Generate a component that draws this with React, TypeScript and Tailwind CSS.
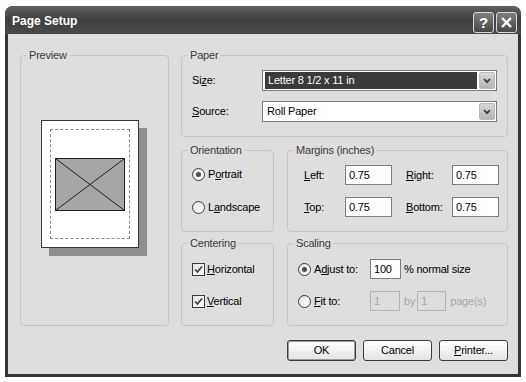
import type { ReactNode } from "react";

function U({ children }: { children: ReactNode }) {
  return <span className="underline decoration-1 underline-offset-[1px]">{children}</span>;
}

function Group({
  label,
  className,
  children,
}: {
  label: string;
  className: string;
  children?: ReactNode;
}) {
  return (
    <fieldset className={`rounded-[4px] border border-[#c6c6c6] ${className}`}>
      <legend className="ml-[6px] px-[2px] text-[11px] leading-[12px] text-[#3a3a3a]">
        {label}
      </legend>
      {children}
    </fieldset>
  );
}

function Radio({ checked }: { checked?: boolean }) {
  return (
    <span className="flex h-[13px] w-[13px] shrink-0 items-center justify-center rounded-full border border-[#3a3a3a] bg-gradient-to-br from-[#e2e2e2] to-white">
      {checked && <span className="h-[5px] w-[5px] rounded-full bg-[#4c4c4c]" />}
    </span>
  );
}

function Check() {
  return (
    <span className="flex h-[13px] w-[13px] shrink-0 items-center justify-center border border-[#3a3a3a] bg-gradient-to-br from-[#e2e2e2] to-white">
      <svg width="9" height="9" viewBox="0 0 9 9">
        <path d="M1 4.5 L3.5 7 L8 1.5" fill="none" stroke="#3a3a3a" strokeWidth="1.6" />
      </svg>
    </span>
  );
}

function Field({
  value,
  className,
  disabled,
}: {
  value: string;
  className: string;
  disabled?: boolean;
}) {
  return (
    <div
      className={`flex h-[20px] items-center border pl-[3px] ${
        disabled
          ? "border-[#b4b4b4] bg-[#dddddd] text-[#a6a6a6]"
          : "border-[#7c7c7c] bg-white text-black"
      } ${className}`}
    >
      {value}
    </div>
  );
}

function Select({ value, selected }: { value: string; selected?: boolean }) {
  return (
    <div className="flex h-[21px] w-[235px] items-center border border-[#7c7c7c] bg-white p-[1px]">
      <div
        className={`flex h-full flex-1 items-center pl-[3px] ${
          selected ? "mx-[1px] bg-[#3a3a3a] text-white" : "text-black"
        }`}
      >
        {value}
      </div>
      <div className="ml-[1px] flex h-full w-[16px] items-center justify-center rounded-[2px] border border-[#b8b8b8] bg-gradient-to-b from-[#d8d8d8] to-[#b4b4b4]">
        <svg width="8" height="6" viewBox="0 0 8 6">
          <path d="M1 1 L4 4.2 L7 1" fill="none" stroke="#3a3a3a" strokeWidth="1.8" />
        </svg>
      </div>
    </div>
  );
}

function Button({ children, primary }: { children: ReactNode; primary?: boolean }) {
  return (
    <button
      type="button"
      className={`flex h-[21px] w-[69px] items-center justify-center rounded-[3px] border border-[#3c3c3c] bg-gradient-to-b from-white to-[#e4e4e4] text-[11px] text-black ${
        primary ? "shadow-[inset_0_0_0_1px_#9c9c9c]" : ""
      }`}
    >
      {children}
    </button>
  );
}

export default function App() {
  return (
    <div className="h-[382px] w-[526px] bg-white pl-[5px] pt-[6px] font-[family-name:Liberation_Sans,Arial,sans-serif] text-[11px] tracking-[-0.2px] text-black">
      <div className="flex h-[371px] w-[516px] flex-col overflow-hidden rounded-t-[8px] bg-[#363636]">
        {/* title bar */}
        <div className="flex h-[28px] shrink-0 items-start justify-between bg-gradient-to-b from-[#616161] via-[#3f3f3f] to-[#4a4a4a] pl-[7px] pr-[4px]">
          <span className="pt-[1px] text-[12px] font-bold leading-[28px] tracking-normal text-white">
            Page Setup
          </span>
          <div className="flex gap-[2px] pt-[6px]">
            <div className="flex h-[21px] w-[21px] items-center justify-center rounded-[3px] border border-[#d8d8d8] bg-gradient-to-b from-[#808080] to-[#474747] text-[15px] font-bold leading-none text-white">
              ?
            </div>
            <div className="flex h-[21px] w-[21px] items-center justify-center rounded-[3px] border border-[#d8d8d8] bg-gradient-to-b from-[#808080] to-[#474747]">
              <svg width="13" height="13" viewBox="0 0 13 13">
                <path d="M2 2 L11 11 M11 2 L2 11" stroke="white" strokeWidth="2.4" />
              </svg>
            </div>
          </div>
        </div>

        {/* body */}
        <div className="mx-[3px] mb-[3px] flex flex-1 flex-col bg-[#dedede] pl-[12px] pr-[9px] pt-[15px]">
          <div className="flex gap-[12px]">
            <Group label="Preview" className="h-[277px] w-[149px]">
              <div className="pl-[20px] pt-[59px]">
                <div className="h-[128px] w-[98px] border border-[#3a3a3a] bg-white p-[8px] shadow-[8px_8px_0_#8e8e8e]">
                  <div className="flex h-full w-full items-center border border-dashed border-[#8a8a8a] px-[4px]">
                    <svg className="h-[53px] w-full" viewBox="0 0 70 53" preserveAspectRatio="none">
                      <rect x="0.5" y="0.5" width="69" height="52" fill="#a6a6a6" stroke="#222" />
                      <path d="M0.5 0.5 L69.5 52.5 M69.5 0.5 L0.5 52.5" stroke="#222" strokeWidth="1" />
                    </svg>
                  </div>
                </div>
              </div>
            </Group>

            <div className="flex w-[327px] flex-col">
              <Group label="Paper" className="h-[88px] w-full">
                <div className="pl-[10px] pt-[9px]">
                  <div className="flex h-[21px] items-center">
                    <span className="w-[70px]">
                      Si<U>z</U>e:
                    </span>
                    <Select value="Letter 8 1/2 x 11 in" selected />
                  </div>
                  <div className="mt-[10px] flex h-[21px] items-center">
                    <span className="w-[70px]">
                      <U>S</U>ource:
                    </span>
                    <Select value="Roll Paper" />
                  </div>
                </div>
              </Group>

              <div className="mt-[7px] flex gap-[13px]">
                <Group label="Orientation" className="h-[88px] w-[93px]">
                  <div className="pl-[10px] pt-[8px]">
                    <div className="flex h-[20px] items-center gap-[3px]">
                      <Radio checked />
                      <span>
                        P<U>o</U>rtrait
                      </span>
                    </div>
                    <div className="mt-[13px] flex h-[20px] items-center gap-[3px]">
                      <Radio />
                      <span>
                        L<U>a</U>ndscape
                      </span>
                    </div>
                  </div>
                </Group>

                <Group label="Margins (inches)" className="h-[88px] w-[221px]">
                  <div className="pl-[16px] pt-[9px]">
                    <div className="flex items-center">
                      <span className="w-[41px]">
                        <U>L</U>eft:
                      </span>
                      <Field value="0.75" className="w-[47px]" />
                      <span className="ml-[14px] w-[46px]">
                        <U>R</U>ight:
                      </span>
                      <Field value="0.75" className="w-[47px]" />
                    </div>
                    <div className="mt-[12px] flex items-center">
                      <span className="w-[41px]">
                        <U>T</U>op:
                      </span>
                      <Field value="0.75" className="w-[47px]" />
                      <span className="ml-[14px] w-[46px]">
                        <U>B</U>ottom:
                      </span>
                      <Field value="0.75" className="w-[47px]" />
                    </div>
                  </div>
                </Group>
              </div>

              <div className="mt-[5px] flex gap-[13px]">
                <Group label="Centering" className="h-[89px] w-[93px]">
                  <div className="pl-[10px] pt-[10px]">
                    <div className="flex h-[20px] items-center gap-[2px]">
                      <Check />
                      <span>
                        <U>H</U>orizontal
                      </span>
                    </div>
                    <div className="mt-[12px] flex h-[20px] items-center gap-[2px]">
                      <Check />
                      <span>
                        <U>V</U>ertical
                      </span>
                    </div>
                  </div>
                </Group>

                <Group label="Scaling" className="h-[89px] w-[221px]">
                  <div className="pl-[10px] pt-[10px]">
                    <div className="flex h-[20px] items-center">
                      <div className="flex w-[72px] items-center gap-[3px]">
                        <Radio checked />
                        <span>
                          A<U>d</U>just to:
                        </span>
                      </div>
                      <Field value="100" className="w-[31px]" />
                      <span className="ml-[3px]">% normal size</span>
                    </div>
                    <div className="mt-[12px] flex h-[20px] items-center">
                      <div className="flex w-[72px] items-center gap-[3px]">
                        <Radio />
                        <span>
                          <U>F</U>it to:
                        </span>
                      </div>
                      <Field value="1" className="w-[30px]" disabled />
                      <span className="ml-[4px] mr-[2px] text-[#a6a6a6]">by</span>
                      <Field value="1" className="w-[29px]" disabled />
                      <span className="ml-[4px] text-[#a6a6a6]">page(s)</span>
                    </div>
                  </div>
                </Group>
              </div>
            </div>
          </div>

          <div className="mt-[14px] flex justify-end gap-[7px] pr-[1px]">
            <Button primary>OK</Button>
            <Button>Cancel</Button>
            <Button>
              <U>P</U>rinter...
            </Button>
          </div>
        </div>
      </div>
    </div>
  );
}
